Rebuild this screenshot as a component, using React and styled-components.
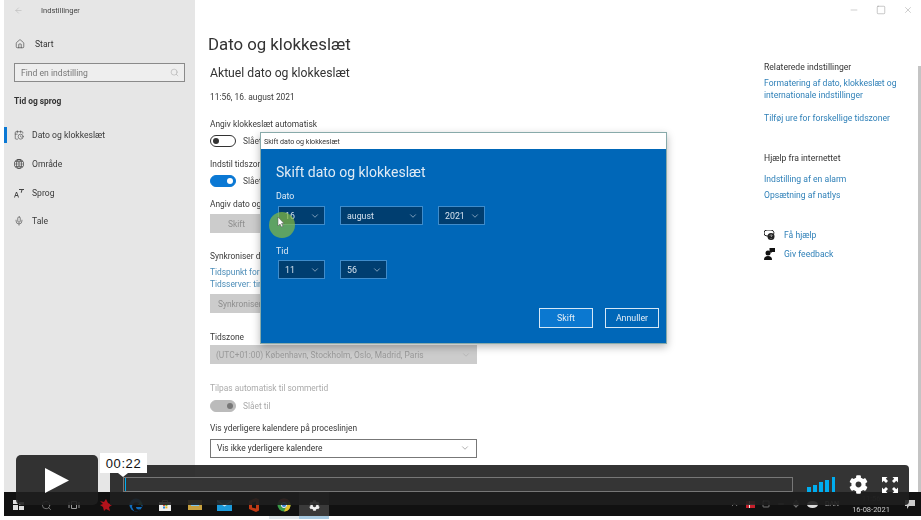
import React from "react"
import styled, { createGlobalStyle } from "styled-components"
import {
  ArrowLeft,
  CalendarClock,
  ChevronDown,
  ChevronUp,
  Home,
  Mic,
  Minus,
  Search,
  Square,
  X,
} from "lucide-react"
import { FaCog } from "react-icons/fa"
import { BsGlobe2 } from "react-icons/bs"

const GlobalStyle = createGlobalStyle`
  html, body {
    margin: 0;
    padding: 0;
    background: #fff;
    overflow: hidden;
  }
  body {
    font-family: Roboto, "Noto Sans", sans-serif;
  }
`

const Stage = styled.div`
  position: relative;
  width: 921px;
  height: 520px;
  padding-left: 4px;
  box-sizing: border-box;
  overflow: hidden;
`

const Desktop = styled.div`
  position: relative;
  width: 917px;
  height: 516px;
  display: flex;
  flex-direction: column;
  filter: blur(0.35px);
`

const SettingsWindow = styled.div`
  flex: 1;
  min-height: 0;
  display: grid;
  grid-template-columns: 191px 1fr 154px 3px;
  background: #fff;
`

const Sidebar = styled.nav`
  background: #e6e6e6;
  display: flex;
  flex-direction: column;
`

const TitleRow = styled.div`
  height: 21px;
  display: flex;
  align-items: center;
  padding-left: 10px;
  gap: 18px;
  font-size: 7.5px;
  color: #444;
  svg {
    color: #aaa;
  }
`

const StartRow = styled.div`
  margin-top: 13px;
  height: 20px;
  display: flex;
  align-items: center;
  gap: 10px;
  padding-left: 11px;
  font-size: 8.6px;
  color: #333;
`

const SearchBox = styled.div`
  margin: 9px 10px 0 10px;
  height: 19px;
  box-sizing: border-box;
  border: 1px solid #8a8a8a;
  background: #eee;
  display: flex;
  align-items: center;
  justify-content: space-between;
  padding: 0 5px 0 6px;
  font-size: 8.6px;
  color: #777;
`

const GroupTitle = styled.div`
  margin: 10px 0 11px 10px;
  height: 18px;
  line-height: 18px;
  font-size: 8.4px;
  font-weight: 700;
  color: #333;
`

const NavItem = styled.div`
  height: 28.7px;
  display: flex;
  align-items: center;
  gap: 8px;
  padding-left: 10px;
  font-size: 8.6px;
  color: #3a3a3a;
  position: relative;
  ${(p) =>
    p.$active &&
    `
    &::before {
      content: "";
      position: absolute;
      left: 0;
      top: 6px;
      width: 2.5px;
      height: 16px;
      background: #0a78d4;
    }
  `}
`

const Main = styled.main`
  padding: 34px 0 0 13px;
  min-width: 0;
  overflow: hidden;
  display: flex;
  flex-direction: column;
  align-items: flex-start;
`

const PageTitle = styled.h1`
  margin: 0;
  font-size: 16.8px;
  line-height: 20px;
  font-weight: 400;
  color: #333;
`

const SectionTitle = styled.h2`
  margin: 11px 0 0 2px;
  font-size: 12.2px;
  line-height: 16px;
  font-weight: 400;
  color: #333;
`

const Label = styled.div`
  margin: ${(p) => p.$top || 0}px 0 0 2px;
  font-size: 8.4px;
  line-height: 12px;
  white-space: nowrap;
  color: ${(p) => p.$color || "#3a3a3a"};
`

const ToggleRow = styled.div`
  margin: ${(p) => p.$top || 4}px 0 0 2px;
  display: flex;
  align-items: center;
  gap: 7px;
  font-size: 8.4px;
  color: ${(p) => (p.$muted ? "#aaa" : "#444")};
`

const Toggle = styled.span`
  width: 26px;
  height: 12px;
  box-sizing: border-box;
  border-radius: 6px;
  border: 1.5px solid ${(p) => (p.$on ? p.$track : "#333")};
  background: ${(p) => (p.$on ? p.$track : "#fff")};
  display: flex;
  align-items: center;
  justify-content: ${(p) => (p.$on ? "flex-end" : "flex-start")};
  padding: 0 2px;
  &::after {
    content: "";
    width: 6px;
    height: 6px;
    border-radius: 50%;
    background: ${(p) => (p.$on ? p.$knob : "#333")};
  }
`

const GreyButton = styled.div`
  margin: ${(p) => p.$top || 0}px 0 0 2px;
  width: ${(p) => p.$w}px;
  height: 19px;
  background: #ccc;
  color: #8e8e8e;
  font-size: 8.4px;
  display: flex;
  align-items: center;
  padding-left: ${(p) => p.$pad}px;
  box-sizing: border-box;
`

const Select = styled.div`
  margin: ${(p) => p.$top}px 0 0 2px;
  width: 267px;
  height: 19px;
  box-sizing: border-box;
  display: flex;
  align-items: center;
  justify-content: space-between;
  padding: 0 6px;
  font-size: 8.4px;
  white-space: nowrap;
  color: ${(p) => (p.$disabled ? "#999" : "#333")};
  background: ${(p) => (p.$disabled ? "#ccc" : "#fff")};
  border: ${(p) => (p.$disabled ? "none" : "1.5px solid #777")};
  svg {
    color: ${(p) => (p.$disabled ? "#aaa" : "#777")};
  }
`

const Aside = styled.aside`
  position: relative;
  display: flex;
  flex-direction: column;
  padding-top: 61px;
`

const WindowButtons = styled.div`
  position: absolute;
  top: 5px;
  right: 5px;
  display: flex;
  gap: 17px;
  color: #888;
  svg {
    display: block;
  }
`

const AsideTitle = styled.div`
  margin-top: ${(p) => p.$top || 0}px;
  font-size: 8.6px;
  line-height: 12px;
  color: #333;
`

const AsideLink = styled.a`
  display: block;
  margin-top: ${(p) => p.$top || 0}px;
  font-size: 8.6px;
  line-height: 12px;
  color: #2f80b8;
`

const HelpRow = styled.div`
  margin-top: ${(p) => p.$top || 0}px;
  display: flex;
  align-items: center;
  gap: 9px;
  line-height: 12px;
  svg {
    display: block;
  }
`

const Scrollbar = styled.div`
  margin-top: 66px;
  background: #c4c4c4;
`

const Dialog = styled.section`
  position: absolute;
  left: 256px;
  top: 132px;
  width: 407px;
  height: 212px;
  box-sizing: border-box;
  background: #0067b8;
  border: 1px solid #8aa;
  box-shadow: 0 3px 8px rgba(0, 0, 0, 0.28);
  display: flex;
  flex-direction: column;
  color: #dfeaf4;
`

const DialogBar = styled.div`
  height: 16px;
  flex: none;
  background: #fff;
  color: #333;
  font-size: 7.1px;
  display: flex;
  align-items: center;
  padding-left: 3px;
`

const DialogBody = styled.div`
  flex: 1;
  padding: 13px 7px 15px 15px;
  display: flex;
  flex-direction: column;
`

const DialogTitle = styled.div`
  font-size: 14px;
  line-height: 20px;
`

const FieldLabel = styled.div`
  margin-top: ${(p) => p.$top}px;
  font-size: 8.8px;
  line-height: 12px;
`

const FieldRow = styled.div`
  margin: ${(p) => p.$top}px 0 0 2px;
  display: flex;
  gap: ${(p) => p.$gap}px;
`

const Dropdown = styled.div`
  width: ${(p) => p.$w}px;
  height: 19px;
  box-sizing: border-box;
  background: #003e70;
  border: 1.5px solid #3f8ccb;
  color: #d5e2ee;
  display: flex;
  align-items: center;
  justify-content: space-between;
  padding: 0 4px 0 6px;
  font-size: 8.8px;
`

const DialogActions = styled.div`
  margin-top: auto;
  display: flex;
  justify-content: flex-end;
  gap: 12px;
`

const DialogButton = styled.div`
  width: 54px;
  height: 20px;
  box-sizing: border-box;
  border: 1.5px solid #d5e8f6;
  background: ${(p) => (p.$primary ? "#0b78d0" : "#0067b8")};
  display: flex;
  align-items: center;
  justify-content: center;
  font-size: 8.8px;
  color: #e4eef6;
`

const CursorMark = styled.div`
  position: absolute;
  left: 265px;
  top: 212px;
  width: 26px;
  height: 26px;
  border-radius: 50%;
  background: rgba(134, 188, 64, 0.7);
  svg {
    display: block;
    margin: 5px 0 0 8px;
  }
`

const Taskbar = styled.footer`
  flex: none;
  height: 24px;
  background: #111;
  display: flex;
  align-items: center;
  justify-content: space-between;
`

const TaskIcons = styled.div`
  display: flex;
  align-items: center;
  height: 100%;
`

const TaskIcon = styled.div`
  width: ${(p) => p.$w || 30}px;
  height: 100%;
  box-sizing: border-box;
  padding-top: 2px;
  display: flex;
  align-items: center;
  justify-content: center;
  background: ${(p) => (p.$active ? "#3a3a3a" : "transparent")};
  box-shadow: ${(p) => (p.$line ? `0 3px 0 ${p.$line}` : "none")};
  svg {
    display: block;
  }
`

const Tray = styled.div`
  display: flex;
  align-items: center;
  gap: 7px;
  padding-right: 6px;
  height: 100%;
  color: #aaa;
  font-size: 7px;
  svg {
    display: block;
  }
`

const Clock = styled.div`
  display: flex;
  flex-direction: column;
  align-items: center;
  font-size: 7.5px;
  line-height: 11px;
  margin-left: 6px;
  margin-right: 8px;
  color: #ccc;
  span:first-child {
    color: #444;
  }
`

const PlayButton = styled.div`
  position: absolute;
  left: 16px;
  top: 455px;
  width: 82px;
  height: 50px;
  border-radius: 5px;
  background: rgba(31, 31, 31, 0.907);
  display: flex;
  align-items: center;
  justify-content: center;
`

const PlayerBar = styled.div`
  position: absolute;
  left: 110px;
  top: 465px;
  width: 799px;
  height: 40px;
  box-sizing: border-box;
  padding: 12px 11px 13px 13px;
  border-radius: 0 4px 4px 0;
  background: rgba(31, 31, 31, 0.907);
  display: flex;
  align-items: center;
`

const Track = styled.div`
  width: 670px;
  height: 15px;
  box-sizing: border-box;
  border: 1px solid #777;
  background: #353535;
  padding-left: 1px;
  &::before {
    content: "";
    display: block;
    width: 1px;
    height: 100%;
    background: #00adef;
  }
`

const Signal = styled.div`
  margin-left: 14px;
  width: 28px;
  height: 15px;
  display: flex;
  align-items: flex-end;
  justify-content: space-between;
`

const SignalBar = styled.span`
  width: 3.5px;
  height: ${(p) => p.$h}px;
  background: #00adef;
`

const ControlSlot = styled.div`
  margin-left: 14px;
  svg {
    display: block;
  }
`

const TimeTip = styled.div`
  position: absolute;
  left: 100px;
  top: 453px;
  width: 47px;
  height: 20px;
  background: #fff;
  color: #111;
  font-family: "Liberation Sans", sans-serif;
  font-size: 13px;
  letter-spacing: 0.6px;
  display: flex;
  align-items: center;
  justify-content: center;
  &::after {
    content: "";
    position: absolute;
    left: 18px;
    bottom: -4px;
    border-left: 5px solid transparent;
    border-right: 5px solid transparent;
    border-top: 4px solid #fff;
  }
`

const StartLogo = () => (
  <svg width="13" height="12" viewBox="0 0 13 12">
    <path d="M1 1h5v4H1zM7 3h5v3H7zM1 6h5v5H1zM7 7h5v4H7z" fill="#ddd" />
  </svg>
)

const TaskView = () => (
  <svg width="12" height="10" viewBox="0 0 12 10" fill="none" stroke="#999">
    <path d="M3.5 1.5h5v7h-5zM1 2v6M11 2v6" />
  </svg>
)

const RedApp = () => (
  <svg width="15" height="15" viewBox="0 0 15 15">
    <path d="M2 3l4 1 2-3 2 4 4 2-3 2 1 4-4-2-2 2-1-4-3-2 3-1z" fill="#b3121b" />
  </svg>
)

const EdgeLogo = () => (
  <svg width="14" height="14" viewBox="0 0 14 14">
    <circle cx="7" cy="7" r="6.5" fill="#0f6cbd" />
    <path d="M3 9c0-4 4-6 7-4 2 1 3 3 3 4H7c0 2 2 3 5 2-2 3-5 3-7 2" fill="#111" />
    <path d="M8 7h5c0-2-1-3-2-4 0 2-1 3-3 4z" fill="#3fc27c" />
  </svg>
)

const StoreLogo = () => (
  <svg width="14" height="14" viewBox="0 0 14 14">
    <path d="M4.500 4V2.500h5V4" fill="none" stroke="#bbb" />
    <path d="M1 4h12v9H1z" fill="#eee" />
    <path d="M5 6h2v2H5z" fill="#e2553a" />
    <path d="M7.400 6h2v2h-2z" fill="#6bb83a" />
    <path d="M5 8.400h2v2H5z" fill="#2b88d8" />
    <path d="M7.400 8.400h2v2h-2z" fill="#f2b01e" />
  </svg>
)

const FolderLogo = () => (
  <svg width="14" height="12" viewBox="0 0 14 12">
    <path d="M0 1h14v10H0z" fill="#c9a23f" />
    <path d="M3 4h8v3H3z" fill="#7fc4ea" />
  </svg>
)

const MailLogo = () => (
  <svg width="15" height="11" viewBox="0 0 15 11">
    <path d="M0 0h15v11H0z" fill="#1b9bdc" />
    <path d="M0 0l7.500 5L15 0v1.500l-7.500 5L0 1.500z" fill="#bfe6f8" />
  </svg>
)

const OfficeLogo = () => (
  <svg width="12" height="14" viewBox="0 0 12 14">
    <path d="M1 3l7-3 3 1.500v11L8 14l-7-3z" fill="#c23a15" />
    <path d="M4 4.500l4-1v7l-4-1z" fill="#111" />
  </svg>
)

const ChromeLogo = () => (
  <svg width="14" height="14" viewBox="0 0 14 14">
    <circle cx="7" cy="7" r="6.500" fill="#3a9b48" />
    <path d="M7 .5a6.500 6.500 0 0 1 5.600 3.200H7z M1.400 3.700A6.500 6.500 0 0 1 7 .5v3.200z" fill="#cf4030" />
    <path d="M12.600 3.700A6.500 6.500 0 0 1 7 13.500L9.500 8z" fill="#e5c02b" />
    <circle cx="7" cy="7" r="2.600" fill="#3d86d6" stroke="#eee" />
  </svg>
)

const FullscreenIcon = () => (
  <svg width="16" height="16" viewBox="0 0 16 16" fill="#fff">
    <path d="M0 0h5.500L3.800 1.700 6 4 4 6 1.700 3.800 0 5.500zM16 0v5.500l-1.700-1.700L12 6l-2-2 2.200-2.300L10.500 0zM0 16v-5.500l1.700 1.700L4 10l2 2-2.200 2.300L5.500 16zM16 16h-5.500l1.700-1.700L10 12l2-2 2.300 2.200L16 10.500z" />
  </svg>
)

const HelpIcon = () => (
  <svg width="11" height="11" viewBox="0 0 11 11">
    <path d="M3 0h4a3 3 0 0 1 1 5.800V7L6 6H3a3 3 0 0 1 0-6z" fill="none" stroke="#222" strokeWidth="1" />
    <circle cx="7" cy="6.500" r="3.500" fill="#222" />
    <path d="M6 5.500c.5-1 2-.8 2 .2 0 .6-1 .7-1 1.300M7 8v.6" stroke="#fff" strokeWidth=".7" fill="none" />
  </svg>
)

const FeedbackIcon = () => (
  <svg width="11" height="12" viewBox="0 0 11 12" fill="#111">
    <circle cx="4" cy="5" r="2.500" />
    <path d="M0 12c0-3 1.500-4 4-4s4 1 4 4z" />
    <path d="M5.500 0H11v4H8L6.500 5.500V4h-1z" />
  </svg>
)

const selectChevron = <ChevronDown size={10} strokeWidth={1.4} />

const App = () => {
  return (
    <>
      <GlobalStyle />
      <Stage>
        <Desktop>
          <SettingsWindow>
            <Sidebar>
              <TitleRow>
                <ArrowLeft size={9} strokeWidth={1.2} />
                Indstillinger
              </TitleRow>
              <StartRow>
                <Home size={10} strokeWidth={1.4} />
                Start
              </StartRow>
              <SearchBox>
                Find en indstilling
                <Search size={9} strokeWidth={1.2} color="#999" />
              </SearchBox>
              <GroupTitle>Tid og sprog</GroupTitle>
              <NavItem $active>
                <CalendarClock size={10} strokeWidth={1.4} />
                Dato og klokkeslæt
              </NavItem>
              <NavItem>
                <BsGlobe2 size={10} />
                Område
              </NavItem>
              <NavItem>
                <svg width="10" height="10" viewBox="0 0 10 10" fill="#444">
                  <path d="M0 9.500L2 4h1l2 5.500H4L3.600 8H1.400L1 9.500zM1.700 7h1.600L2.500 5zM5 1h5v1H8.500L7.500 5 6.700 4.500 7.400 2H5z" />
                </svg>
                Sprog
              </NavItem>
              <NavItem>
                <Mic size={10} strokeWidth={1.4} />
                Tale
              </NavItem>
            </Sidebar>

            <Main>
              <PageTitle>Dato og klokkeslæt</PageTitle>
              <SectionTitle>Aktuel dato og klokkeslæt</SectionTitle>
              <Label $top={10}>11:56, 16. august 2021</Label>
              <Label $top={15}>Angiv klokkeslæt automatisk</Label>
              <ToggleRow $top={5}>
                <Toggle />
                Slået fra
              </ToggleRow>
              <Label $top={11}>Indstil tidszone automatisk</Label>
              <ToggleRow $top={5}>
                <Toggle $on $track="#0a78d4" $knob="#fff" />
                Slået til
              </ToggleRow>
              <Label $top={11}>Angiv dato og klokkeslæt manuelt</Label>
              <GreyButton $top={4} $w={55} $pad={18}>
                Skift
              </GreyButton>
              <Label $top={17}>Synkroniser dit ur</Label>
              <Label $top={4} $color="#4c8db8">
                Tidspunkt for seneste synkronisering
              </Label>
              <Label $color="#4c8db8">Tidsserver: time.windows.com</Label>
              <GreyButton $top={4} $w={65} $pad={8}>
                Synkroniser
              </GreyButton>
              <Label $top={18}>Tidszone</Label>
              <Select $disabled $top={2}>
                (UTC+01:00) København, Stockholm, Oslo, Madrid, Paris
                {selectChevron}
              </Select>
              <Label $top={18} $color="#aaa">
                Tilpas automatisk til sommertid
              </Label>
              <ToggleRow $top={6} $muted>
                <Toggle $on $track="#bbb" $knob="#777" />
                Slået til
              </ToggleRow>
              <Label $top={10}>Vis yderligere kalendere på proceslinjen</Label>
              <Select $top={4.5}>
                Vis ikke yderligere kalendere
                {selectChevron}
              </Select>
            </Main>

            <Aside>
              <WindowButtons>
                <Minus size={10} strokeWidth={1} />
                <Square size={10} strokeWidth={1.1} />
                <X size={10} strokeWidth={1} />
              </WindowButtons>
              <AsideTitle>Relaterede indstillinger</AsideTitle>
              <AsideLink $top={4}>Formatering af dato, klokkeslæt og</AsideLink>
              <AsideLink>internationale indstillinger</AsideLink>
              <AsideLink $top={11}>Tilføj ure for forskellige tidszoner</AsideLink>
              <AsideTitle $top={28}>Hjælp fra internettet</AsideTitle>
              <AsideLink $top={9}>Indstilling af en alarm</AsideLink>
              <AsideLink $top={4}>Opsætning af natlys</AsideLink>
              <HelpRow $top={28}>
                <HelpIcon />
                <AsideLink>Få hjælp</AsideLink>
              </HelpRow>
              <HelpRow $top={7}>
                <FeedbackIcon />
                <AsideLink>Giv feedback</AsideLink>
              </HelpRow>
            </Aside>
            <Scrollbar />
          </SettingsWindow>

          <Taskbar>
            <TaskIcons>
              <TaskIcon $w={28}>
                <StartLogo />
              </TaskIcon>
              <TaskIcon $w={28}>
                <Search size={11} color="#999" strokeWidth={1.5} />
              </TaskIcon>
              <TaskIcon $w={28}>
                <TaskView />
              </TaskIcon>
              <TaskIcon $w={34}>
                <RedApp />
              </TaskIcon>
              <TaskIcon $w={28}>
                <EdgeLogo />
              </TaskIcon>
              <TaskIcon>
                <StoreLogo />
              </TaskIcon>
              <TaskIcon>
                <FolderLogo />
              </TaskIcon>
              <TaskIcon $w={29}>
                <MailLogo />
              </TaskIcon>
              <TaskIcon>
                <OfficeLogo />
              </TaskIcon>
              <TaskIcon $line="#dfe6ea">
                <ChromeLogo />
              </TaskIcon>
              <TaskIcon $active $line="#a8cbe2">
                <FaCog size={11} color="#eee" />
              </TaskIcon>
            </TaskIcons>
            <Tray>
              <ChevronUp size={9} />
              <svg width="9" height="7" viewBox="0 0 9 7">
                <path d="M0 0h9v7H0z" fill="#c8202c" />
                <path d="M3 0h1v7H3zM0 3h9v1H0z" fill="#eee" />
              </svg>
              <Square size={8} />
              <Minus size={8} />
              <Mic size={8} />
              <svg width="11" height="7" viewBox="0 0 11 7">
                <ellipse cx="5.500" cy="3.500" rx="5.500" ry="3.500" fill="#ddd" />
              </svg>
              DAN
              <Clock>
                <span>11:56</span>
                <span>16-08-2021</span>
              </Clock>
              <svg width="10" height="9" viewBox="0 0 10 9">
                <path d="M0 0h10v6H4L2 9V6H0z" fill="#ccc" />
              </svg>
            </Tray>
          </Taskbar>

          <Dialog>
            <DialogBar>Skift dato og klokkeslæt</DialogBar>
            <DialogBody>
              <DialogTitle>Skift dato og klokkeslæt</DialogTitle>
              <FieldLabel $top={8}>Dato</FieldLabel>
              <FieldRow $top={4} $gap={15}>
                <Dropdown $w={47}>
                  16
                  {selectChevron}
                </Dropdown>
                <Dropdown $w={83}>
                  august
                  {selectChevron}
                </Dropdown>
                <Dropdown $w={47}>
                  2021
                  {selectChevron}
                </Dropdown>
              </FieldRow>
              <FieldLabel $top={20}>Tid</FieldLabel>
              <FieldRow $top={3} $gap={15}>
                <Dropdown $w={47}>
                  11
                  {selectChevron}
                </Dropdown>
                <Dropdown $w={47}>
                  56
                  {selectChevron}
                </Dropdown>
              </FieldRow>
              <DialogActions>
                <DialogButton $primary>Skift</DialogButton>
                <DialogButton>Annuller</DialogButton>
              </DialogActions>
            </DialogBody>
          </Dialog>

          <CursorMark>
            <svg width="8" height="11" viewBox="0 0 8 11">
              <path d="M1 0v9l2-2 1.500 3 1.500-.7L4.500 6.500H7z" fill="#fff" stroke="#555" strokeWidth="0.5" />
            </svg>
          </CursorMark>
        </Desktop>

        <PlayButton>
          <svg width="24" height="25" viewBox="0 0 24 25">
            <path d="M0 0l24 12.500L0 25z" fill="#fff" />
          </svg>
        </PlayButton>
        <PlayerBar>
          <Track />
          <Signal>
            <SignalBar $h={5} />
            <SignalBar $h={7} />
            <SignalBar $h={10} />
            <SignalBar $h={12} />
            <SignalBar $h={15} />
          </Signal>
          <ControlSlot>
            <FaCog size={19} color="#fff" />
          </ControlSlot>
          <ControlSlot>
            <FullscreenIcon />
          </ControlSlot>
        </PlayerBar>
        <TimeTip>00:22</TimeTip>
      </Stage>
    </>
  )
}

export default App
